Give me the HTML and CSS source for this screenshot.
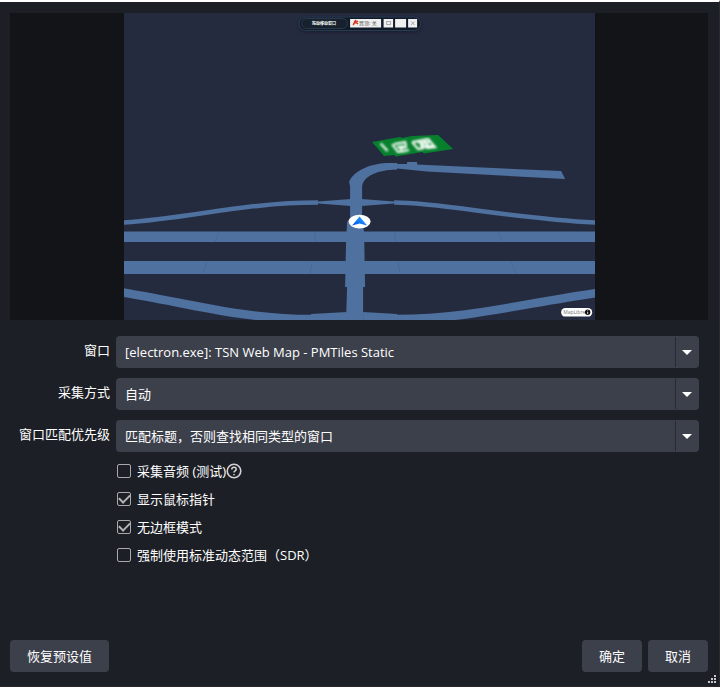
FILE: index.html
```html
<!DOCTYPE html>
<html lang="zh-CN">
<head>
<meta charset="utf-8">
<title>窗口采集</title>
<link rel="stylesheet" href="styles.css">
</head>
<body>
<main class="dialog">
  <section class="preview">
    <svg class="map" viewBox="124 13 471 307" role="img" aria-label="地图预览">
      <defs>
        <linearGradient id="nav" x1="0" y1="1" x2="1" y2="0"><stop offset="0" stop-color="#0050ee"/><stop offset="1" stop-color="#25acff"/></linearGradient>
        <filter id="soft"><feGaussianBlur stdDeviation="0.8"/></filter>
        <filter id="glow" x="-10%" y="-50%" width="120%" height="200%"><feGaussianBlur stdDeviation="1.500"/></filter>
      </defs>
      <rect x="124" y="13" width="471" height="307" fill="#252b3f"/>
      <g fill="#4e719f">
        <path d="M124 231.500H595V242H124ZM124 261H595V274H124Z"/>
        <path d="M350 184H362V222L364 232L365 287H363V320H346L347 287H345L346 242L347 222L350 218Z"/>
        <path d="M349 182C353 171 370 163 390 163H397V164H407V162H417V164.500L427 165L561 171L565 179L427 171.500L397 168.500V169.500C377 170 364 176 362 186H350Z"/>
        <path d="M318 201.500L351 199V206L318 203.500ZM361 199L394 201.500V203.500L361 206ZM311 314L347 312V321H311ZM363 312L397 314V321H363Z"/>
      </g>
      <g fill="none" stroke="#4e719f">
        <path stroke-width="4.500" d="M122 222.600L124 222.500C191 218 244 202.500 318 202.500M394 202.500C441 202.500 508 218 595 222.500L597 222.600"/>
        <path stroke-width="8.500" d="M120 291.800L124 292.500C184 302 240 319 312 319M396 319C466 319 520 304 595 293L599 292.400"/>
      </g>
      <g fill="none" stroke="#426590" stroke-width=".6"><path d="M219 232L215 242M315 232V242M207 262L202 274M312 262L310 274M395 232V242M498 232L502 242M398 262L400 274M511 262L516 274"/></g>
      <path fill="#07802e" d="M372 142L400 137L402 138L412 136L438 135L453 149L424 153.500L422 152L396 156.500L394 155L384 156Z"/>
      <g fill="none" stroke="#eefaf0" stroke-width="2.200" filter="url(#soft)">
        <path d="M380.500 143.500L387.500 151"/>
        <path d="M392 144L398 152L403 151M394 144L405 142L406 146M397 147L404 146M402 151L400 148L407 147M402 151.500L409 150"/>
        <path d="M412 142L418 149L424 148M412 142L428 139L435 147L427 148L420 143L430 142M420 146H433M424 141L430 148"/>
      </g>
      <ellipse cx="359.500" cy="221.500" rx="11" ry="6.800" fill="#fff"/>
      <path fill="url(#nav)" d="M359.500 216.500L367 225.500L359.500 223.500L352 225.500Z"/>
      <rect x="299" y="18" width="122" height="14" rx="7" fill="#141b2b" filter="url(#glow)"/>
      <rect x="299" y="17" width="121.500" height="13.500" rx="6.700" fill="#101a29" stroke="#293b51"/>
      <rect x="301.500" y="18.500" width="46" height="10" rx="5" fill="#17212e" stroke="#334557" stroke-width=".7"/>
      <text class="tiny handle" x="312" y="25">拖动移动窗口</text>
      <g fill="#f0f0f0"><rect x="350" y="19" width="31" height="8.500"/><rect x="383.500" y="19" width="9.500" height="8.500"/><rect x="395" y="19" width="11" height="8.500"/><rect x="408" y="19" width="9" height="8.500"/></g>
      <path d="M354 21L358 24M356 20L353 25M355 23L358 21" stroke="#d23c25" stroke-width="1.500"/>
      <text class="tiny" x="359" y="25">置顶: 关</text>
      <path d="M386.500 21.500H390.500V24.500H386.500ZM411 21.500L414.500 25M414.500 21.500L411 25" fill="none" stroke="#888" stroke-width=".7"/>
      <rect x="561" y="308" width="31" height="8.500" rx="4.200" fill="#fff"/>
      <text class="tiny credit" x="563" y="314">MapLibre</text>
      <circle cx="587.500" cy="312.200" r="2.700" fill="#111"/><path d="M587.500 310.300V311M587.500 311.700V314" stroke="#fff" stroke-width=".8"/>
    </svg>
  </section>

  <form class="settings">
    <label class="name" for="window">窗口</label>
    <div class="combo"><select id="window"><option>[electron.exe]: TSN Web Map - PMTiles Static</option></select></div>
    <label class="name" for="method">采集方式</label>
    <div class="combo"><select id="method"><option>自动</option></select></div>
    <label class="name" for="priority">窗口匹配优先级</label>
    <div class="combo"><select id="priority"><option>匹配标题，否则查找相同类型的窗口</option></select></div>
    <div class="checks">
      <label class="check"><input type="checkbox"><span>采集音频 (测试)</span><svg class="help" viewBox="0 0 16 16" aria-hidden="true"><circle cx="8" cy="8" r="6.800"/><path d="M5.800 6.400C5.800 3.500 10.200 3.600 10.200 6.200C10.200 7.900 8 7.700 8 9.500M8 10.900V12.200"/></svg></label>
      <label class="check"><input type="checkbox" checked><span>显示鼠标指针</span></label>
      <label class="check"><input type="checkbox" checked><span>无边框模式</span></label>
      <label class="check"><input type="checkbox"><span>强制使用标准动态范围（SDR）</span></label>
    </div>
  </form>

  <footer class="actions">
    <button class="reset" type="button">恢复预设值</button>
    <button type="button">确定</button>
    <button type="button">取消</button>
  </footer>
  <svg class="grip" viewBox="0 0 8 8" aria-hidden="true"><path d="M6 0H8V2H6ZM3 3H5V5H3ZM6 3H8V5H6ZM0 6H2V8H0ZM3 6H5V8H3ZM6 6H8V8H6Z"/></svg>
</main>
</body>
</html>
```
FILE: styles.css
```css
* { box-sizing: border-box; }

body {
  margin: 0;
  background: #1d1f26;
  color: #fff;
  font: 13px/20px "Open Sans", "Noto Sans CJK SC", sans-serif;
}

.dialog {
  position: relative;
  display: flex;
  flex-direction: column;
  min-height: 100vh;
  padding: 11px 11px 14px 10px;
  border-top: 2px solid #fff;
  border-bottom: 1px solid #2b2529;
  border-right: 1px solid #272a31;
  background: #1d1f26;
}

.preview {
  display: flex;
  justify-content: center;
  padding-left: 1px;
  background: #131418;
}

.map {
  display: block;
  width: 67.6%;
}

.tiny {
  font-size: 5px;
  fill: #555;
}

.handle {
  font-size: 4px;
  font-weight: 700;
  fill: #fff;
}

.credit { fill: #777; }

.settings {
  display: grid;
  grid-template-columns: 100px 1fr;
  gap: 10px 6px;
  padding: 16px 9px 0 0;
}

.name {
  padding-top: 4px;
  text-align: right;
  white-space: nowrap;
}

.combo {
  position: relative;
  height: 32px;
}

.combo select {
  appearance: none;
  width: 100%;
  height: 100%;
  padding: 0 32px 0 9px;
  border: 0;
  border-radius: 4px;
  background: #3c404b;
  color: inherit;
  font: inherit;
}

.combo::before {
  content: "";
  position: absolute;
  top: 1px;
  right: 23px;
  bottom: 1px;
  width: 1px;
  background: #272a33;
  pointer-events: none;
}

.combo::after {
  content: "";
  position: absolute;
  top: 14px;
  right: 7px;
  border: 5px solid transparent;
  border-top-color: #fff;
  border-bottom: 0;
  pointer-events: none;
}

.checks {
  grid-column: 2;
  display: grid;
  gap: 8px;
  justify-items: start;
  margin-top: -1px;
}

.check {
  display: flex;
  align-items: center;
}

.check input {
  appearance: none;
  display: grid;
  place-items: center;
  width: 14px;
  height: 14px;
  margin: 0 6px 0 1px;
  border: 1px solid #a9a9ac;
  border-radius: 2px;
}

.check input:checked::before {
  content: "";
  width: 9px;
  height: 5px;
  margin-bottom: 3px;
  border: solid #b4b4b7;
  border-width: 0 0 2px 2px;
  transform: rotate(-45deg);
}

.help {
  width: 16px;
  height: 16px;
  fill: none;
  stroke: #d2d2d4;
  stroke-width: 1.600;
}

.actions {
  display: flex;
  gap: 6px;
  margin-top: auto;
}

.actions button {
  height: 32px;
  min-width: 60px;
  padding: 0 17px;
  border: 0;
  border-radius: 4px;
  background: #3c404b;
  color: inherit;
  font: inherit;
}

.actions .reset { margin-right: auto; }

.grip {
  position: absolute;
  right: 3px;
  bottom: 3px;
  width: 8px;
  height: 8px;
  fill: #c9c9cc;
}
```
